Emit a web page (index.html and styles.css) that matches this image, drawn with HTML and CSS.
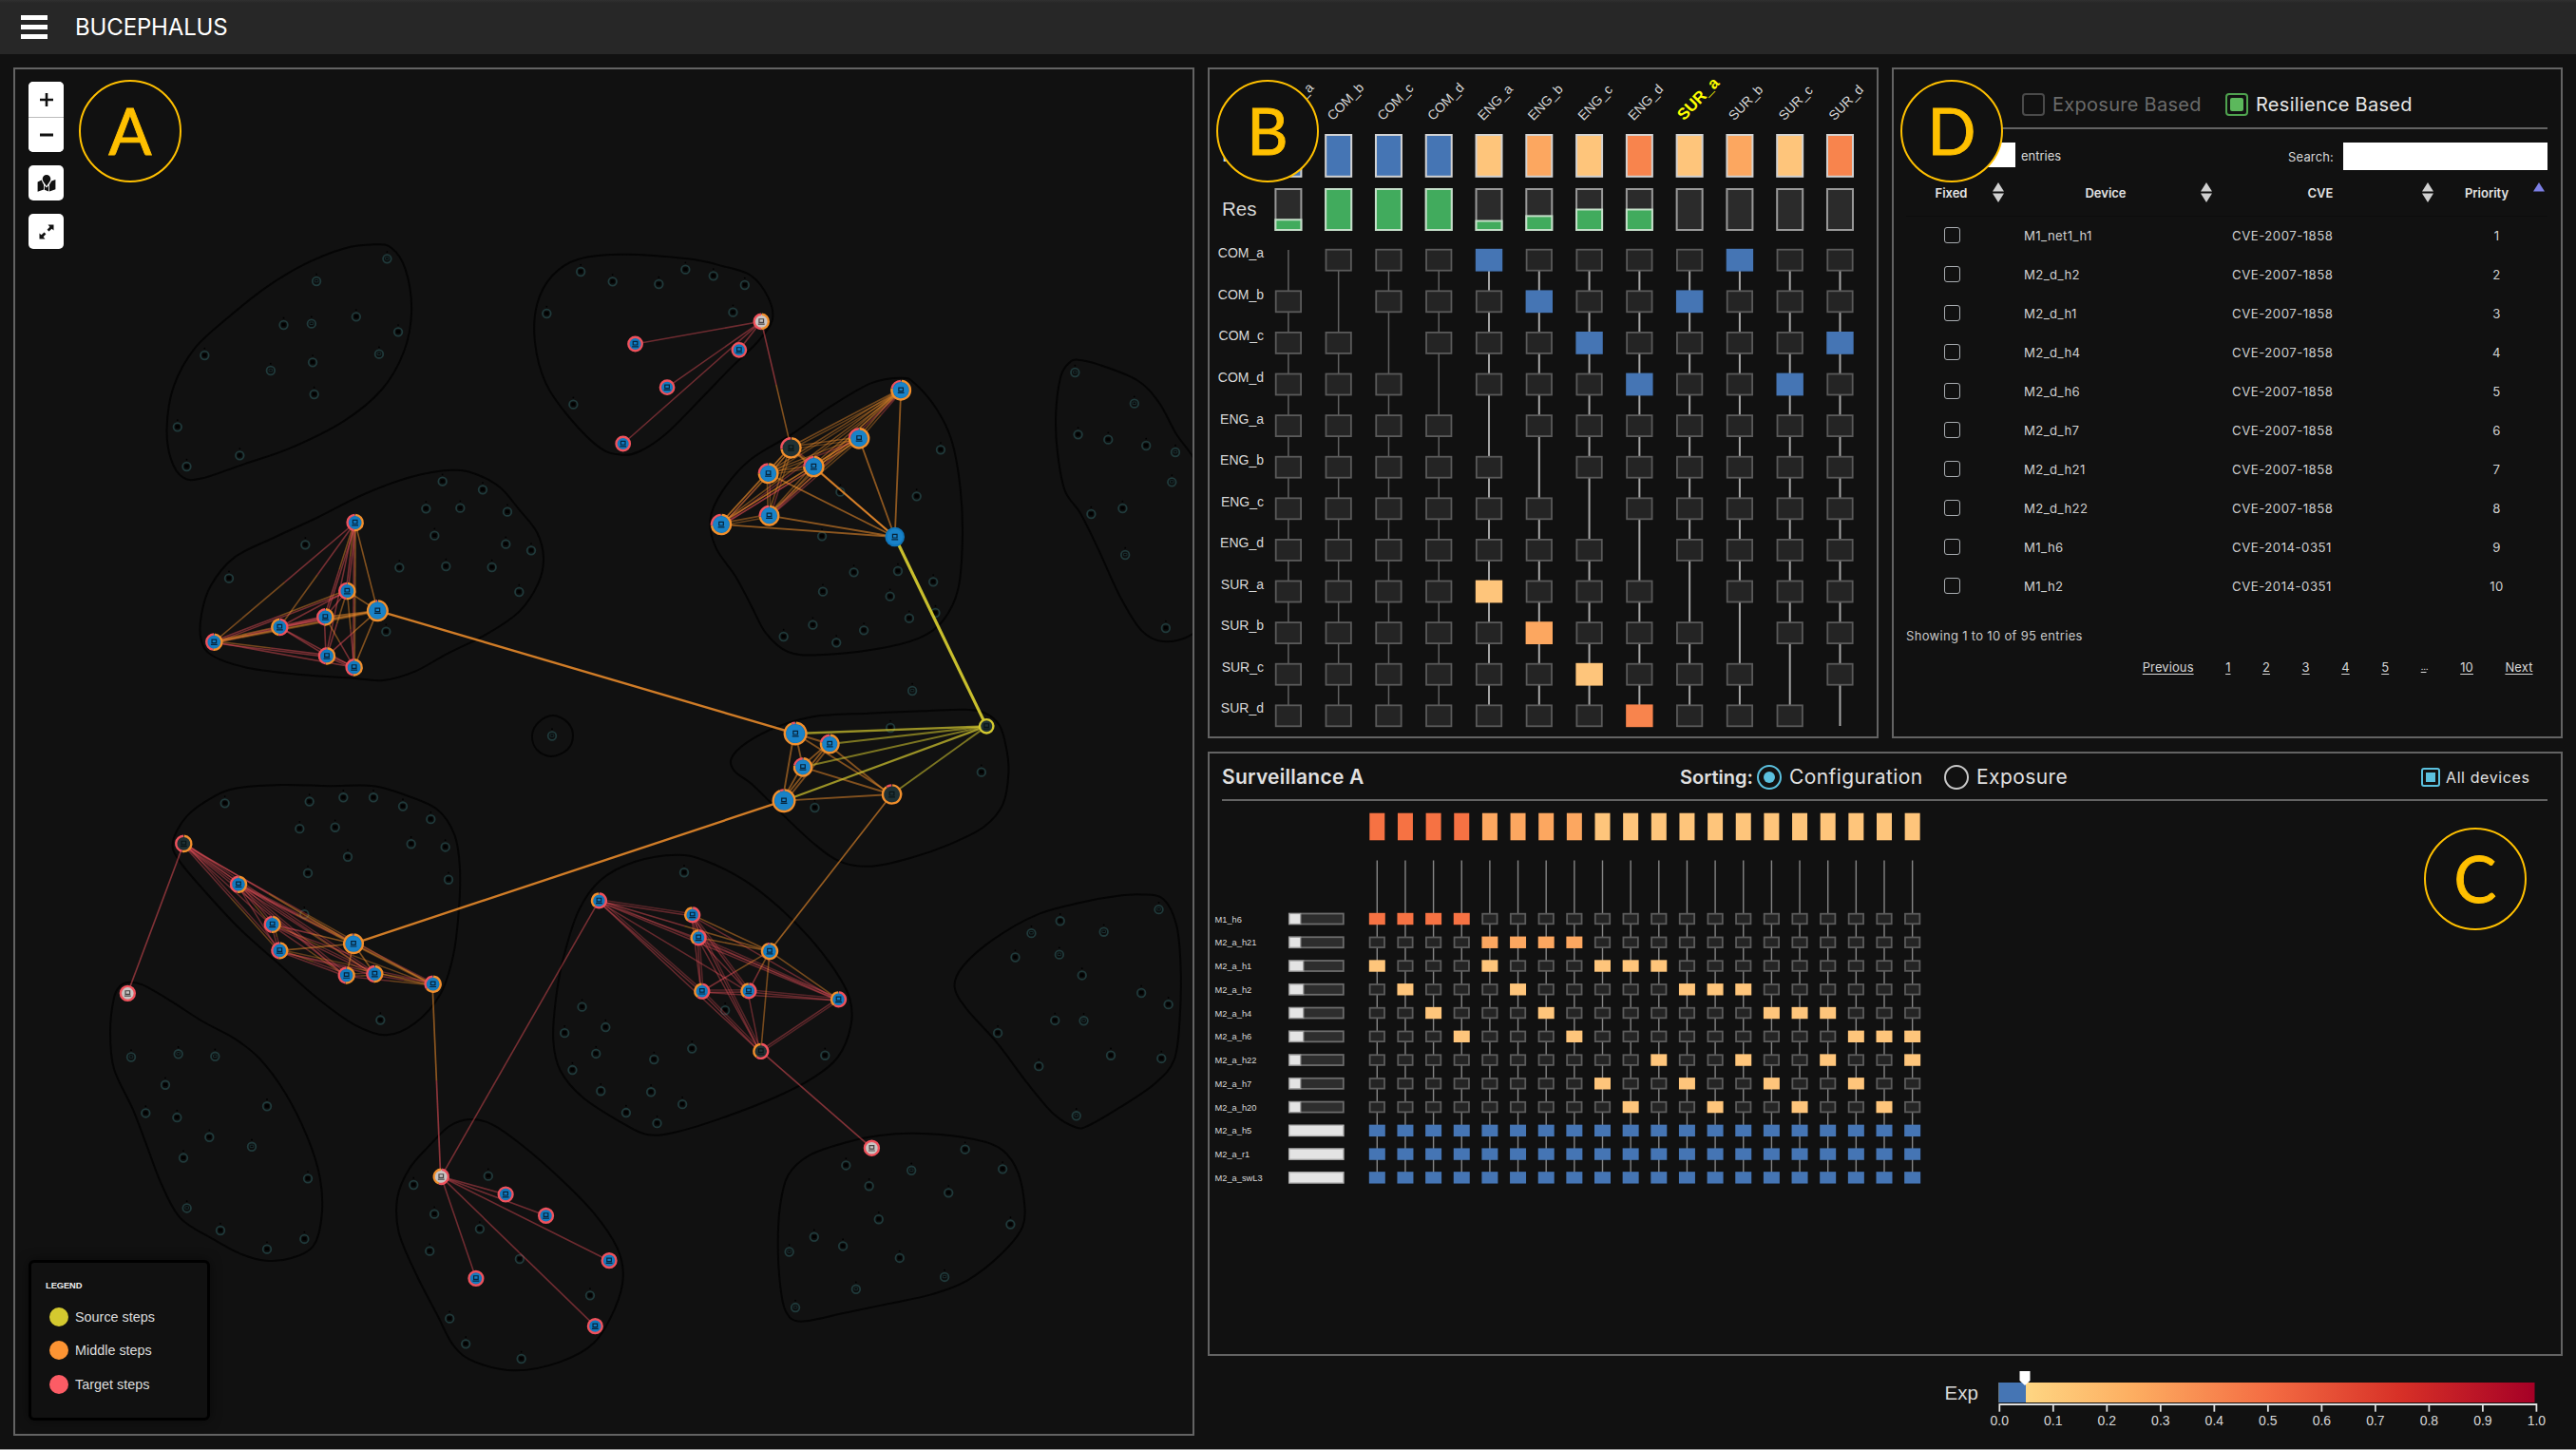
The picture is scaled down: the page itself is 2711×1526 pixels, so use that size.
FILE: index.html
```html
<!DOCTYPE html>
<html lang="en">
<head>
<meta charset="utf-8">
<title>Bucephalus</title>
<link rel="stylesheet" href="styles.css">
</head>
<body>
<header class="topbar">
  <div class="burger"><span></span><span></span><span></span></div>
  <h1 class="brand">BUCEPHALUS</h1>
</header>

<main class="layout">
  <section class="panel network">
    <svg class="network-canvas" id="network" viewBox="16 73 1239 1436"></svg>
    <div class="map-tools">
      <div class="tool-group">
        <button class="tool"><svg viewBox="0 0 16 16" width="16" height="16"><path d="M8 1v14M1 8h14" stroke="#111" stroke-width="2.6"/></svg></button>
        <button class="tool"><svg viewBox="0 0 16 16" width="16" height="16"><path d="M1 8h14" stroke="#111" stroke-width="2.8"/></svg></button>
      </div>
      <div class="tool-group">
        <button class="tool"><svg viewBox="0 0 20 18" width="20" height="18"><path d="M0.6 7.4 4.8 5.4 Q5.6 8 7 10.2V15.6L0.6 17.8ZM13 10.2Q14.6 8 15.2 6.6L19.4 5V15.2L13 17.6ZM7.8 11.2 10 13.6 12.2 11.2V17.4L7.8 15.8Z" fill="#111"/><path d="M10 0a4.3 4.3 0 0 1 4.3 4.3C14.3 7 11.2 10 10 12 8.800 10 5.700 7 5.700 4.300A4.300 4.300 0 0 1 10 0Z" fill="#111"/></svg></button>
      </div>
      <div class="tool-group">
        <button class="tool"><svg viewBox="0 0 16 16" width="16" height="16"><path d="M9.500 0.500H15.500V6.500L13.500 4.800 10.500 7.600 8.600 5.700 11.400 2.700ZM6.500 15.500H.5V9.500L2.500 11.200 5.500 8.400 7.400 10.300 4.600 13.300Z" fill="#111"/></svg></button>
      </div>
    </div>
    <div class="legend">
      <h2 class="legend-title">LEGEND</h2>
      <div class="legend-row"><i class="dot dot-source"></i>Source steps</div>
      <div class="legend-row"><i class="dot dot-middle"></i>Middle steps</div>
      <div class="legend-row"><i class="dot dot-target"></i>Target steps</div>
    </div>
    <div class="badge badge-a">A</div>
  </section>

  <section class="panel matrix">
    <svg class="chart" id="matrix" viewBox="1273 73 702 702"></svg>
    <div class="badge badge-b">B</div>
  </section>

  <section class="panel fixes">
    <div class="fixes-head">
      <label class="mode mode-off"><i class="check"></i><span>Exposure Based</span></label>
      <label class="mode mode-on"><i class="check"></i><span>Resilience Based</span></label>
    </div>
    <div class="fixes-tools">
      <div class="length"><i class="select"></i><span>entries</span></div>
      <div class="search"><span>Search:</span><i class="field"></i></div>
    </div>
    <table class="grid">
      <colgroup><col class="c-fixed"><col class="c-device"><col class="c-cve"><col class="c-prio"></colgroup>
      <thead>
        <tr>
          <th><div class="th"><span>Fixed</span><svg class="sort" viewBox="0 0 12 21"><path d="M6 0 12 9.500H0ZM6 21 0 11.500H12Z"/></svg></div></th>
          <th><div class="th"><span>Device</span><svg class="sort" viewBox="0 0 12 21"><path d="M6 0 12 9.500H0ZM6 21 0 11.500H12Z"/></svg></div></th>
          <th><div class="th"><span>CVE</span><svg class="sort" viewBox="0 0 12 21"><path d="M6 0 12 9.500H0ZM6 21 0 11.500H12Z"/></svg></div></th>
          <th><div class="th"><span>Priority</span><svg class="sort sort-asc" viewBox="0 0 12 21"><path d="M6 0 12 9.500H0Z"/></svg></div></th>
        </tr>
      </thead>
      <tbody>
        <tr><td><i class="tick"></i></td><td>M1_net1_h1</td><td>CVE-2007-1858</td><td>1</td></tr>
        <tr><td><i class="tick"></i></td><td>M2_d_h2</td><td>CVE-2007-1858</td><td>2</td></tr>
        <tr><td><i class="tick"></i></td><td>M2_d_h1</td><td>CVE-2007-1858</td><td>3</td></tr>
        <tr><td><i class="tick"></i></td><td>M2_d_h4</td><td>CVE-2007-1858</td><td>4</td></tr>
        <tr><td><i class="tick"></i></td><td>M2_d_h6</td><td>CVE-2007-1858</td><td>5</td></tr>
        <tr><td><i class="tick"></i></td><td>M2_d_h7</td><td>CVE-2007-1858</td><td>6</td></tr>
        <tr><td><i class="tick"></i></td><td>M2_d_h21</td><td>CVE-2007-1858</td><td>7</td></tr>
        <tr><td><i class="tick"></i></td><td>M2_d_h22</td><td>CVE-2007-1858</td><td>8</td></tr>
        <tr><td><i class="tick"></i></td><td>M1_h6</td><td>CVE-2014-0351</td><td>9</td></tr>
        <tr><td><i class="tick"></i></td><td>M1_h2</td><td>CVE-2014-0351</td><td>10</td></tr>
      </tbody>
    </table>
    <p class="info">Showing 1 to 10 of 95 entries</p>
    <nav class="pager"><a>Previous</a><a>1</a><a>2</a><a>3</a><a>4</a><a>5</a><a class="more">…</a><a>10</a><a>Next</a></nav>
    <div class="badge badge-d">D</div>
  </section>

  <section class="panel detail">
    <div class="detail-head">
      <h2 class="detail-title">Surveillance A</h2>
      <div class="sorting">
        <strong>Sorting:</strong>
        <i class="radio radio-on"></i><span class="opt opt-conf">Configuration</span>
        <i class="radio"></i><span class="opt opt-exp">Exposure</span>
      </div>
      <label class="all"><i class="all-box"></i>All devices</label>
    </div>
    <svg class="detail-chart" id="detail" viewBox="1273 843 760 420"></svg>
    <div class="badge badge-c">C</div>
  </section>

  <footer class="scale">
    <svg id="scale" viewBox="1271 1441 1426 70"></svg>
  </footer>
</main>
<script src="app.js"></script>
</body>
</html>
```
FILE: styles.css
```css
* { box-sizing: border-box; }
body {
  margin: 0;
  width: 2711px;
  height: 1526px;
  overflow: hidden;
  background: #111;
  border-bottom: 1px solid #999;
  color: #d8d8d8;
  font-family: Inter, "Liberation Sans", sans-serif;
}
h1, h2, p { margin: 0; font-weight: 400; }
i { display: block; font-style: normal; flex: none; }
svg { display: block; }

.topbar {
  display: flex;
  align-items: center;
  gap: 29px;
  height: 57px;
  padding: 0 22px 1px;
  background: linear-gradient(#303030, #272727 3px);
}
.burger { display: flex; flex-direction: column; gap: 5px; width: 28px; }
.burger span { height: 5px; background: #fff; }
.brand { font-size: 24px; color: #fff; letter-spacing: -0.15px; }

.layout {
  display: grid;
  grid-template-columns: 1243px 706px 706px;
  grid-template-rows: 706px 636px 70px;
  gap: 14px;
  padding: 14px 14px 0 14px;
}
.panel { position: relative; border: 2px solid #636363; overflow: hidden; }
.network { grid-row: 1 / 4; }
.detail { grid-column: 2 / 4; }
.scale { grid-column: 2 / 4; }
.network-canvas { width: 1239px; height: 1436px; }
.chart { width: 702px; height: 702px; }
.detail-chart { width: 760px; height: 420px; }
.scale svg { width: 1426px; height: 70px; }

.badge {
  position: absolute;
  display: flex;
  align-items: center;
  justify-content: center;
  width: 108px;
  height: 108px;
  padding-bottom: 1px;
  border: 2px solid #ffc000;
  border-radius: 50%;
  background: #111;
  color: #ffc000;
  font-family: Lato, sans-serif;
  font-size: 67px;
  line-height: 1;
  -webkit-text-stroke: 0.900px #ffc000;
}
.badge-a { left: 67px; top: 11px; }
.badge-b { left: 7px; top: 11px; }
.badge-c { left: 1278px; top: 78px; }
.badge-d { left: 7px; top: 11px; }

.map-tools { position: absolute; left: 14px; top: 13px; display: flex; flex-direction: column; gap: 14px; }
.tool-group { border-radius: 5px; overflow: hidden; background: #fff; }
.tool {
  display: flex;
  align-items: center;
  justify-content: center;
  width: 37px;
  height: 37px;
  padding: 0;
  border: 0;
  background: #fff;
}
.tool + .tool { border-top: 1px solid #bbb; }

.legend {
  position: absolute;
  left: 14px;
  top: 1253px;
  width: 191px;
  height: 169px;
  padding: 18px 0 0 15px;
  border: 3px solid #000;
  border-radius: 6px;
  background: #111;
  box-shadow: 0 0 12px rgba(0, 0, 0, .5);
  font-family: "Liberation Sans", Arial, sans-serif;
  font-size: 14.4px;
}
.legend-title { font-size: 9.4px; font-weight: 700; color: #eee; line-height: 12px; margin-bottom: 17px; letter-spacing: -.1px; }
.legend-row { display: flex; align-items: center; gap: 7px; height: 20px; margin-bottom: 15.400px; padding-left: 4px; color: #ddd; }
.dot { width: 20px; height: 20px; border-radius: 50%; }
.dot-source { background: #d4c92f; }
.dot-middle { background: #fd9433; }
.dot-target { background: #fc5c65; }

.fixes { padding: 0 14px 0 13px; }
.fixes-head {
  display: flex;
  align-items: center;
  height: 63px;
  padding: 13px 0 0 122px;
  border-bottom: 2px solid #636363;
  font-size: 20px;
  letter-spacing: .28px;
}
.mode { display: flex; align-items: center; gap: 8px; }
.mode span { white-space: nowrap; margin-top: -1px; }
.mode-off { width: 214px; color: #6b6b6b; }
.mode-on { color: #e6e6e6; }
.check { width: 24px; height: 24px; border: 2px solid #4a4a4a; border-radius: 4px; }
.mode-on .check { border-color: #4fa34f; padding: 3px; }
.mode-on .check::after { content: ""; display: block; width: 14px; height: 14px; border-radius: 2px; background: #5cb85c; }
.fixes-tools { display: flex; justify-content: space-between; margin-top: 14px; height: 29px; font-size: 13px; }
.length { display: flex; gap: 6px; padding-left: 46px; }
.length span { padding-top: 6px; }
.select { width: 69px; height: 26px; background: #fff; }
.search { display: flex; gap: 10px; }
.search span { padding-top: 7px; letter-spacing: .15px; }
.field { width: 215px; height: 29px; background: #fff; }

.grid { width: 675px; table-layout: fixed; border-collapse: collapse; font-size: 13.200px; color: #d0d0d0; }
.c-fixed { width: 106px; }
.c-device { width: 219px; }
.c-cve { width: 233px; }
.c-prio { width: 117px; }
.grid th { height: 48px; padding: 0 3px 0 4px; border-bottom: 1px solid #0c0c0c; font-size: 13px; font-weight: 600; color: #e4e4e4; vertical-align: top; }
.th { display: flex; align-items: center; padding-top: 13px; }
.th span { flex: 1; text-align: center; }
.sort { width: 12px; height: 21px; fill: #d0d0d0; }
.sort-asc { fill: #7c7fe4; }
.grid td { height: 41px; padding: 0; letter-spacing: .38px; }
.grid td:first-child { padding-right: 10px; }
.grid td:nth-child(2), .grid td:nth-child(3) { padding-left: 18px; }
.grid td:nth-child(3) { letter-spacing: .5px; }
.grid td:last-child { padding-left: 10px; text-align: center; }
.tick { width: 17px; height: 17px; margin: 0 auto; border: 1.500px solid #a8acb0; border-radius: 3px; }
.info { margin-top: 24px; font-size: 13px; line-height: 16px; color: #c8c8c8; letter-spacing: .32px; }
.pager { display: flex; justify-content: flex-end; gap: 33.500px; margin-top: 17px; padding-right: 15.500px; font-size: 13px; line-height: 16px; letter-spacing: .1px; }
.pager a { text-decoration: underline; text-underline-offset: 2px; }
.pager .more { width: 8px; letter-spacing: -2px; font-size: 9px; }

.detail-head {
  display: flex;
  align-items: center;
  height: 50px;
  margin: 0 14px 0 13px;
  padding-top: 1px;
  border-bottom: 2px solid #636363;
  font-size: 21px;
  color: #e0e0e0;
}
.detail-title { width: 482px; font-size: 21px; font-weight: 600; letter-spacing: .25px; }
.sorting { display: flex; align-items: center; width: 780px; }
.sorting strong { width: 81px; font-size: 20px; font-weight: 600; white-space: nowrap; }
.radio { width: 26px; height: 26px; border: 2.500px solid #c8c8c8; border-radius: 50%; }
.radio-on { border-color: #5bc0de; padding: 5px; }
.radio-on::after { content: ""; display: block; width: 12px; height: 12px; border-radius: 50%; background: #5bc0de; }
.opt { margin-left: 8px; letter-spacing: .42px; }
.opt-conf { width: 163px; }
.all { display: flex; align-items: center; gap: 6px; font-size: 16px; letter-spacing: .6px; white-space: nowrap; }
.all-box { width: 20px; height: 20px; border: 2px solid #5bc0de; border-radius: 3px; padding: 3px; }
.all-box::after { content: ""; display: block; width: 10px; height: 10px; background: #5bc0de; }

svg text { font-family: "Liberation Sans", Arial, sans-serif; fill: #d8d8d8; }
svg .row-label { font-size: 14px; text-anchor: end; }
svg .col-label { font-size: 14px; }
svg .col-label-active { font-size: 17px; font-weight: 700; fill: #ff0; }
svg .axis-title { font-size: 20.500px; }
svg .device-label { font-size: 9.300px; }
svg .scale-label { font-size: 14px; text-anchor: middle; }
```
FILE: app.js
```js
const NS = 'http://www.w3.org/2000/svg';
function add(parent, tag, attrs, text) {
  const el = document.createElementNS(NS, tag);
  for (const k in attrs) el.setAttribute(k, attrs[k]);
  if (text !== undefined) el.textContent = text;
  parent.appendChild(el);
  return el;
}

/* ---------- attack graph ---------- */
const YELLOW = '#d4c92f', ORANGE = '#f28f2c', RED = '#f0525c';
const net = document.getElementById('network');
const hullLayer = add(net, 'g', { fill: 'none', stroke: '#050505', 'stroke-width': 2 });
const idleLayer = add(net, 'g', {});
const edgeLayer = add(net, 'g', {});
const nodeLayer = add(net, 'g', {});

// each frame maps local cluster units to canvas units
const frame = (ox, oy, sx, sy) => p => [ox + p[0] / sx, oy + p[1] / sy];
const F1 = frame(0, 0, 2.489, 3), F2 = frame(540, 230, 2.178, 3), F3 = frame(150, 480, 3, 3);
const F4 = frame(700, 680, 2.8, 3), F5 = frame(100, 800, 3, 2.8), F6 = frame(540, 880, 2.178, 2.8);
const F7 = frame(0, 1200, 2.24, 3);

function hull(f, flat) {
  const p = [];
  for (let i = 0; i < flat.length; i += 2) p.push(f([flat[i], flat[i + 1]]));
  const n = p.length;
  let d = `M${p[0]}`;
  for (let i = 0; i < n; i++) {
    const a = p[(i - 1 + n) % n], b = p[i], c = p[(i + 1) % n], e = p[(i + 2) % n];
    d += `C${b[0] + (c[0] - a[0]) / 6},${b[1] + (c[1] - a[1]) / 6} ${c[0] - (e[0] - b[0]) / 6},${c[1] - (e[1] - b[1]) / 6} ${c[0]},${c[1]}`;
  }
  add(hullLayer, 'path', { d: d + 'Z' });
}
function idle(f, list) {
  for (const q of list) {
    const [x, y] = f(q);
    add(idleLayer, 'circle', { cx: x, cy: y, r: 4.3, fill: '#0c0d0d', stroke: '#203a3b', 'stroke-width': 1.800 });
    add(idleLayer, 'circle', { cx: x, cy: y - 7.300, r: 0.900, fill: '#000' });
    if (q[2]) add(idleLayer, 'path', { d: `M${x - 1.800} ${y - 1.600}h3.600v2.400h-3.600z`, fill: '#050505', stroke: '#203638', 'stroke-width': .8 });
    else add(idleLayer, 'rect', { x: x - 2, y: y - 2, width: 4, height: 3.400, fill: '#000' });
  }
}
function arc(x, y, r, from, to) {
  const a = from * 2 * Math.PI, b = to * 2 * Math.PI;
  return `M${x + r * Math.sin(a)} ${y - r * Math.cos(a)}A${r} ${r} 0 ${to - from > .5 ? 1 : 0} 1 ${x + r * Math.sin(b)} ${y - r * Math.cos(b)}`;
}
const FILLS = { blue: '#0f76bb', white: '#c9c4c2', dark: '#1f3033' };
// share = part of the ring, on the left of the top, that is painted in `first`
function node(f, x0, y0, r, kind, share, first, second) {
  const [x, y] = f([x0, y0]);
  add(nodeLayer, 'circle', { cx: x, cy: y, r: r - 1, fill: FILLS[kind] });
  if (kind === 'blue') add(nodeLayer, 'circle', { cx: x, cy: y, r: r - 3, fill: '#1b86cc', opacity: r > 9.500 ? .8 : .25 });
  if (second) add(nodeLayer, 'path', { d: arc(x, y, r - 1.200, 0.01, 1 - share), fill: 'none', stroke: second, 'stroke-width': 2.400 });
  if (first && share === 1) add(nodeLayer, 'circle', { cx: x, cy: y, r: r - 1.200, fill: 'none', stroke: first, 'stroke-width': 2.400 });
  else if (first) add(nodeLayer, 'path', { d: arc(x, y, r - 1.200, 1.005 - share, .995), fill: 'none', stroke: first, 'stroke-width': 2.400 });
  const ink = kind === 'dark' ? '#0a1416' : kind === 'white' ? '#4a4444' : '#06243c';
  add(nodeLayer, 'path', { d: `M${x - 2.300} ${y - 2.600}h4.600v3.600h-4.600zM${x - 3.400} ${y + 2.800}h6.800`, fill: 'none', stroke: ink, 'stroke-width': 1.200 });
  return [x, y];
}
function edge(a, b, ca, cb, w = 1.700, o = .5, shift = 0) {
  const dx = b[0] - a[0], dy = b[1] - a[1], l = Math.hypot(dx, dy);
  const ox = -dy / l * shift, oy = dx / l * shift;
  const m = [(a[0] + b[0]) / 2, (a[1] + b[1]) / 2];
  const s = (p, q, c) => add(edgeLayer, 'line', { x1: p[0] + ox, y1: p[1] + oy, x2: q[0] + ox, y2: q[1] + oy, stroke: c, 'stroke-width': w, 'stroke-opacity': o });
  if (ca === cb) s(a, b, ca);
  else { s(a, m, ca); s(m, b, cb); }
}

hull(F1, [980,772,1025,782,1062,850,1078,980,1058,1110,1000,1230,900,1330,760,1415,640,1465,530,1510,480,1508,448,1450,437,1350,455,1220,510,1100,600,1000,700,905,800,833,900,785]);
idle(F1, [[1014,817,1],[829,888,1],[743,1026],[816,1022,1],[933,1000],[1043,1048],[993,1118,1],[536,1122],[819,1144],[709,1170,1],[823,1245],[465,1348],[628,1438],[489,1473]]);

hull(F2, [255,113,400,127,480,150,545,180,585,250,594,320,560,390,500,470,430,570,350,680,290,735,250,746,200,725,130,630,75,520,50,390,55,270,90,180,150,128]);
idle(F2, [[155,168],[228,199],[334,207],[395,161],[459,181],[531,210],[504,296],[77,300],[138,587]]);
hull(F2, [890,503,920,520,970,600,1005,700,1025,850,1030,1010,1020,1170,985,1270,930,1325,830,1360,700,1378,630,1368,580,1310,545,1220,510,1130,465,1040,452,950,480,860,545,760,640,680,720,600,820,520]);
idle(F2, [[980,730],[925,877],[750,863],[708,1003],[781,1117],[882,1113],[963,1147],[710,1178],[864,1193],[968,1245],[908,1262],[687,1283],[620,1320],[741,1339],[804,1300],[915,1491,1]]);
hull(F2, [1295,446,1340,460,1430,510,1480,580,1520,680,1557,750,1610,880,1640,1050,1620,1220,1557,1312,1490,1335,1440,1300,1390,1190,1340,1040,1300,930,1265,860,1248,740,1244,620,1255,500,1275,455]);
idle(F2, [[1288,486,1],[1424,584,1],[1295,682],[1364,698],[1451,717],[1518,738,1],[1510,832,1],[1397,915],[1325,933],[1403,1062,1],[1496,1293]]);

hull(F3, [980,44,1060,60,1130,100,1190,170,1245,240,1266,320,1250,400,1190,490,1090,560,960,625,860,680,760,708,650,700,500,690,330,668,220,630,185,580,186,500,215,410,290,320,420,255,550,195,700,120,850,65]);
idle(F3, [[947,80],[1074,106],[895,166],[1003,164],[1152,176],[922,251],[1147,278],[1227,298],[514,280],[273,386],[811,352],[958,348],[1103,351],[1189,429],[769,554]]);

hull(F4, [880,200,940,210,985,250,1005,320,1012,400,995,500,940,570,840,625,720,670,610,695,520,682,440,625,340,525,260,440,205,395,195,355,240,305,330,255,440,222,600,212,760,205]);
idle(F4, [[664,258],[932,398],[441,510]]);

hull(F5, [590,73,740,76,880,76,980,103,1080,145,1135,220,1152,320,1148,450,1130,580,1090,690,1010,775,920,810,820,780,700,700,580,600,460,500,350,390,265,295,246,240,290,165,370,110,450,82]);
idle(F5, [[410,127],[677,122],[784,110],[879,110],[972,136],[1060,174],[646,202],[758,198],[998,247],[1106,256],[798,285],[672,333],[1116,352],[661,454],[901,766]]);
hull(F5, [105,655,150,662,240,710,340,770,440,820,520,880,600,980,670,1110,710,1230,716,1340,690,1430,620,1467,540,1475,460,1455,370,1410,270,1350,210,1250,165,1140,120,1030,60,910,48,800,60,700,80,665]);
idle(F5, [[114,875,1],[263,866,1],[379,873,1],[222,957],[160,1040],[259,1053],[361,1111],[543,1020],[495,1139,1],[279,1172],[672,1233],[290,1320,1],[396,1386],[543,1441],[661,1411]]);

hull(F6, [375,55,440,72,530,130,610,210,680,300,740,400,772,480,774,560,745,650,690,710,600,770,480,830,380,870,310,880,250,845,160,770,108,690,92,600,98,480,115,360,150,220,200,130,280,75]);
idle(F6, [[392,107],[158,503],[212,563],[118,580],[190,641],[136,689],[323,658],[410,626],[715,646],[486,513],[201,751],[316,754],[259,815],[388,790],[330,846]]);
hull(F6, [1440,172,1490,185,1520,260,1530,380,1528,540,1515,660,1470,730,1390,800,1320,852,1290,858,1240,820,1180,730,1110,610,1040,510,1012,445,1030,385,1100,305,1200,232,1310,193,1380,177]);
idle(F6, [[1480,216,1],[1254,250],[1188,286,1],[1354,282,1],[1151,357],[1252,349,1],[1304,410],[1440,462],[1502,496],[1242,543],[1308,544,1],[1111,580],[1370,646],[1486,655],[1205,678],[1291,824,1]]);
hull(F6, [920,876,1030,887,1110,915,1150,970,1170,1060,1168,1150,1120,1230,1040,1310,960,1350,860,1378,760,1405,660,1430,625,1400,612,1320,607,1200,612,1090,630,1000,680,940,770,900,840,882]);
idle(F6, [[763,970],[913,985,1],[1036,923],[1122,981],[816,1031],[998,1051],[838,1129],[1140,1144],[690,1181],[756,1208],[633,1225,1],[886,1243],[989,1299,1],[786,1335,1],[647,1389,1]]);

hull(F7, [1109,-66,1160,-50,1230,15,1320,120,1400,230,1455,340,1469,430,1450,530,1400,640,1320,700,1215,727,1120,700,1070,650,1030,550,980,420,940,290,937,180,965,90,1010,20,1060,-45]);
idle(F7, [[1151,113],[975,141],[1024,233],[1131,280],[1013,350],[1225,375],[1391,490],[1060,563],[1098,643],[1229,690]]);

const F0 = frame(0, 0, 1, 1);
hull(F0, [582,753,597,760,603,774,597,789,580,796,565,789,560,774,567,760]);
idle(F0, [[581,774.500,1]]);

// Cluster: communication
const hub = node(F2, 569, 325, 8.800, 'white', .5, RED, ORANGE);
for (const q of [[280,396],[518,415],[353,533],[252,711]])
  edge(hub, node(F2, q[0], q[1], 8.400, 'blue', 1, RED), RED, RED, 1.600, .42);

// Cluster: upper engineering
const T = node(F2, 889, 542, 11, 'blue', .22, RED, ORANGE), U = node(F2, 793, 694, 11.300, 'blue', .25, RED, ORANGE);
const V = node(F2, 637, 724, 11.300, 'dark', .27, RED, ORANGE), W = node(F2, 689, 783, 11.300, 'blue', .25, RED, ORANGE);
const X = node(F2, 585, 805, 11, 'blue', .25, RED, ORANGE), Y = node(F2, 587, 938, 11, 'blue', .27, RED, ORANGE);
const Z = node(F2, 477, 966, 11.300, 'blue', .27, RED, ORANGE), S = node(F2, 875, 1005, 11.300, 'blue', 0);
edge(hub, V, RED, ORANGE, 1.600, .5);
const up = [T, U, V, W, X, Y, Z];
for (let i = 0; i < up.length; i++)
  for (let j = i + 1; j < up.length; j++) {
    edge(up[i], up[j], ORANGE, ORANGE, 1.600, .42, 1.300);
    edge(up[i], up[j], (i + j) % 4 === 1 ? RED : ORANGE, j > 4 && i < 4 ? RED : ORANGE, 1.500, .36, -1.300);
  }
for (const p of up) edge(p, S, ORANGE, ORANGE, 1.800, .55);
edge(W, S, ORANGE, ORANGE, 1.800, .4);

// Cluster: left engineering
const P = [[671,210],[646,426],[577,508],[226,587],[582,631],[668,667]].map(q => node(F3, q[0], q[1], 9.300, 'blue', .48, RED, ORANGE));
P.push(node(F3, 433, 540, 9.300, 'blue', .48, ORANGE, RED));
const R = node(F3, 742, 488, 11.500, 'blue', .03, RED, ORANGE);
// pairs without a direct link: top with far left is single, far left with its nearest neighbours is doubled
const LEFT_LINKS = [
  [0,1,'or',1],[0,1,'rr',-1],[0,2,'or',1],[0,2,'rr',-1],[0,3,'ro',0],[0,4,'rr',1],[0,5,'rr',1],[0,5,'oo',-.5],[0,6,'ro',0],
  [1,2,'rr',0],[1,3,'or',1],[1,3,'rr',-1],[1,6,'rr',0],[1,4,'or',0],[1,5,'or',0],
  [2,3,'ro',1],[2,3,'rr',-1],[2,4,'rr',1],[2,5,'or',0],[2,6,'rr',0],
  [3,4,'or',-1],[3,4,'rr',1],[3,5,'rr',0],[3,6,'or',0],[4,5,'rr',1],[4,5,'rr',-1],[4,6,'rr',0],[5,6,'rr',0]
];
const tone = c => c === 'r' ? RED : ORANGE;
for (const [a, b, t, s] of LEFT_LINKS) edge(P[a], P[b], tone(t[0]), tone(t[1]), 1.600, .45, s);
P.forEach((p, i) => edge(R, p, ORANGE, i === 4 || i === 6 ? RED : ORANGE, 1.600, .5));
edge(R, P[3], ORANGE, ORANGE, 1.600, .35, -1);

// Cluster: surveillance source
const J1 = node(F4, 384, 276, 12.500, 'blue', .06, RED, ORANGE), J2 = node(F4, 485, 309, 10.500, 'blue', .22, RED, ORANGE);
const J3 = node(F4, 406, 382, 10.300, 'blue', .22, RED, ORANGE), J4 = node(F4, 350, 488, 12.500, 'blue', .06, RED, ORANGE);
const J5 = node(F4, 668, 468, 10.800, 'dark', .1, RED, ORANGE), SRC = node(F4, 947, 253, 8.400, 'dark', 1, YELLOW);
const js = [J1, J2, J3, J4, J5];
for (let i = 0; i < 5; i++) for (let j = i + 1; j < 5; j++) edge(js[i], js[j], ORANGE, ORANGE, 1.900, .5, i === 1 || j === 3 ? 1.500 : 0);
edge(J2, J4, ORANGE, ORANGE, 1.900, .45, -1.500);
edge(J1, SRC, YELLOW, YELLOW, 2.400, .7);
edge(J2, SRC, YELLOW, YELLOW, 2, .55);
edge(J3, SRC, YELLOW, YELLOW, 2, .55);
edge(J4, SRC, YELLOW, YELLOW, 2.200, .7);
edge(J5, SRC, YELLOW, YELLOW, 2, .55);
edge(S, SRC, YELLOW, YELLOW, 3.200, .95);
edge(R, J1, ORANGE, ORANGE, 2.400, .85);

// Cluster: lower-left
const K = node(F5, 816, 541, 11, 'blue', .02, RED, ORANGE);
const L = [
  node(F5, 280, 246, 9.300, 'dark', .47, RED, ORANGE),
  ...[[453,366],[560,484],[583,561],[794,634],[883,630]].map(q => node(F5, q[0], q[1], 9.200, 'blue', .48, RED, ORANGE)),
  node(F5, 1067, 660, 9.200, 'blue', .35, RED, ORANGE)
];
for (let i = 0; i < L.length; i++)
  for (let j = i + 1; j < L.length; j++) {
    edge(L[i], L[j], RED, j === 6 || (i + j) % 3 === 0 ? ORANGE : RED, 1.500, .38, 1.200);
    if ((i + j) % 2) edge(L[i], L[j], i < 2 ? RED : ORANGE, RED, 1.500, .34, -1.200);
  }
L.forEach((p, i) => edge(K, p, ORANGE, i < 3 ? RED : ORANGE, 1.600, .5));
edge(J4, K, ORANGE, ORANGE, 2.400, .85);
const L0 = node(F5, 103, 687, 8.700, 'white', 1, RED);
edge(L[0], L0, RED, RED, 1.600, .5);

// Cluster: centre
const N = [
  ...[[197,190],[411,232],[425,299],[433,457],[540,456],[746,481]].map(q => node(F6, q[0], q[1], 8.600, 'blue', .4, ORANGE, RED)),
  node(F6, 568, 634, 8.600, 'dark', .4, ORANGE, RED)
];
const N4 = node(F6, 588, 339, 9.200, 'blue', .04, RED, ORANGE);
for (let i = 0; i < N.length; i++)
  for (let j = i + 1; j < N.length; j++) {
    edge(N[i], N[j], RED, RED, 1.500, .38, 1.100);
    if ((i + j) % 2) edge(N[i], N[j], RED, RED, 1.500, .3, -1.100);
  }
N.forEach((p, i) => edge(N4, p, ORANGE, i === 3 || i === 0 || i === 4 ? RED : ORANGE, 1.600, .45));
edge(J5, N4, ORANGE, ORANGE, 1.700, .6);
const O = node(F6, 822, 919, 8.700, 'white', 1, RED);
edge(N[6], O, RED, RED, 1.600, .5);

// Cluster: bottom
const M = node(F7, 1040, 115, 8.800, 'white', .45, ORANGE, RED);
edge(N[0], M, RED, RED, 1.600, .45);
edge(L[6], M, ORANGE, RED, 1.700, .55, .6);
for (const q of [[1192,171],[1287,238],[1436,380],[1122,436],[1403,587]])
  edge(M, node(F7, q[0], q[1], 8.600, 'blue', 1, RED), RED, RED, 1.600, .42);

/* ---------- configuration matrix ---------- */
const BLUE = '#4575b4', E1 = '#fec57b', E2 = '#fca760', E3 = '#f8844d', GREEN = '#41ab5d';
const mx = document.getElementById('matrix');
const names = ['COM_a','COM_b','COM_c','COM_d','ENG_a','ENG_b','ENG_c','ENG_d','SUR_a','SUR_b','SUR_c','SUR_d'];
const expo = [BLUE,BLUE,BLUE,BLUE,E1,E2,E1,E3,E1,E2,E1,E3];
const resil = [.25,1,1,1,.22,.34,.5,.5,0,0,0,0];
const hits = { '0-4': BLUE, '0-9': BLUE, '1-5': BLUE, '1-8': BLUE, '2-6': BLUE, '2-11': BLUE, '3-7': BLUE, '3-10': BLUE, '8-4': E1, '9-5': E2, '10-6': E1, '11-7': E3 };
add(mx, 'text', { class: 'axis-title', x: 1286, y: 170 }, 'Exp');
add(mx, 'text', { class: 'axis-title', x: 1286, y: 226.500 }, 'Res');
names.forEach((n, c) => {
  const x = 1355.900 + c * 52.780, active = n === 'SUR_a';
  add(mx, 'text', { class: active ? 'col-label-active' : 'col-label', transform: `translate(${x - 6} 127.500) rotate(-46)` }, n);
  add(mx, 'rect', { x: x - 13.500, y: 142, width: 27, height: 43.800, fill: expo[c], stroke: '#d2d2d2', 'stroke-width': 2 });
  add(mx, 'rect', { x: x - 13.500, y: 199, width: 27, height: 43, fill: '#2b2b2b', stroke: '#999', 'stroke-width': 2 });
  if (resil[c]) {
    const h = 43 * resil[c];
    add(mx, 'rect', { x: x - 13.500, y: 242 - h, width: 27, height: h, fill: GREEN, stroke: '#c4dfc9', 'stroke-width': 2 });
  }
  add(mx, 'line', { x1: x, x2: x, y1: 263, y2: 764, stroke: c < 4 ? '#616161' : '#a6a6a6', 'stroke-width': c < 4 ? 1.500 : 2 });
  names.forEach((m, r) => {
    if (r === c) return;
    const y = 273.700 + r * 43.600, hit = hits[r + '-' + c];
    if (hit) add(mx, 'rect', { x: x - 14.200, y: y - 11.900, width: 28.400, height: 23.800, fill: hit });
    else add(mx, 'rect', { x: x - 13.200, y: y - 11, width: 26.400, height: 22, fill: '#242424', stroke: '#5a5a5a', 'stroke-width': 1.800 });
  });
});
names.forEach((n, r) => add(mx, 'text', { class: 'row-label', x: 1330, y: 271.300 + r * 43.560 }, n));

/* ---------- device detail ---------- */
const dt = document.getElementById('detail');
const D1 = '#f67243', D2 = E2, D3 = '#fec57b';
const devices = ['M1_h6','M2_a_h21','M2_a_h1','M2_a_h2','M2_a_h4','M2_a_h6','M2_a_h22','M2_a_h7','M2_a_h20','M2_a_h5','M2_a_r1','M2_a_swL3'];
const on = [[0,1,2,3],[4,5,6,7],[0,4,8,9,10],[1,5,11,12,13],[2,6,14,15,16],[3,7,17,18,19],[10,13,16,19],[8,11,14,17],[9,12,15,18]];
const share = [12,12,15,15,15,15,12,12,12,57,57,57];
for (let c = 0; c < 20; c++) {
  const x = 1449.300 + c * 29.650;
  add(dt, 'rect', { x: x - 8, y: 855.700, width: 16, height: 28.600, fill: c < 4 ? D1 : c < 8 ? D2 : D3 });
  add(dt, 'line', { x1: x, x2: x, y1: 905.500, y2: 1239, stroke: '#858585', 'stroke-width': 1.400 });
}
devices.forEach((name, r) => {
  const y = 967 + r * 24.760;
  add(dt, 'text', { class: 'device-label', x: 1278.500, y: y + 3.500 }, name);
  add(dt, 'rect', { x: 1356.800, y: y - 5.500, width: 57, height: 11, fill: '#2d2d2d', stroke: '#6c6c6c', 'stroke-width': 1.800 });
  add(dt, 'rect', { x: 1356.800, y: y - 5.500, width: share[r], height: 11, fill: '#e4e4e4', stroke: r > 8 ? '#b4b4b4' : '#9a9a9a', 'stroke-width': 1.200 });
  for (let c = 0; c < 20; c++) {
    const x = 1449.300 + c * 29.650;
    const fill = r > 8 ? BLUE : on[r].includes(c) ? (r === 0 ? D1 : r === 1 ? D2 : D3) : null;
    if (fill) add(dt, 'rect', { x: x - 8.500, y: y - 6.200, width: 17, height: 12.400, fill });
    else add(dt, 'rect', { x: x - 7.700, y: y - 5.300, width: 15.400, height: 10.600, fill: '#242424', stroke: '#5c5c5c', 'stroke-width': 1.800 });
  }
});

/* ---------- exposure scale ---------- */
const sc = document.getElementById('scale');
const grad = add(add(sc, 'defs', {}), 'linearGradient', { id: 'expo', gradientUnits: 'userSpaceOnUse', x1: 2103.500, x2: 2667.500, y1: 0, y2: 0 });
[[.05, '#fed683'], [.25, '#fdae61'], [.5, '#f46d43'], [.75, '#d73027'], [1, '#a50026']].forEach(s => add(grad, 'stop', { offset: s[0], 'stop-color': s[1] }));
add(sc, 'text', { class: 'axis-title', x: 2046.500, y: 1473.300 }, 'Exp');
add(sc, 'rect', { x: 2103.500, y: 1455, width: 564, height: 21, fill: 'url(#expo)' });
add(sc, 'rect', { x: 2103.500, y: 1455, width: 28.500, height: 21, fill: BLUE });
add(sc, 'path', { d: 'M2125.500 1443h11v10l-5.500 5-5.500-5z', fill: '#fff' });
add(sc, 'path', { d: 'M2104.300 1478H2669.400', stroke: '#e0e0e0', 'stroke-width': 2 });
for (let i = 0; i <= 10; i++) {
  const x = 2104.300 + i * 56.510;
  add(sc, 'line', { x1: x, x2: x, y1: 1477, y2: 1485.700, stroke: '#e0e0e0', 'stroke-width': 1.800 });
  add(sc, 'text', { class: 'scale-label', x, y: 1500 }, (i / 10).toFixed(1));
}
```
